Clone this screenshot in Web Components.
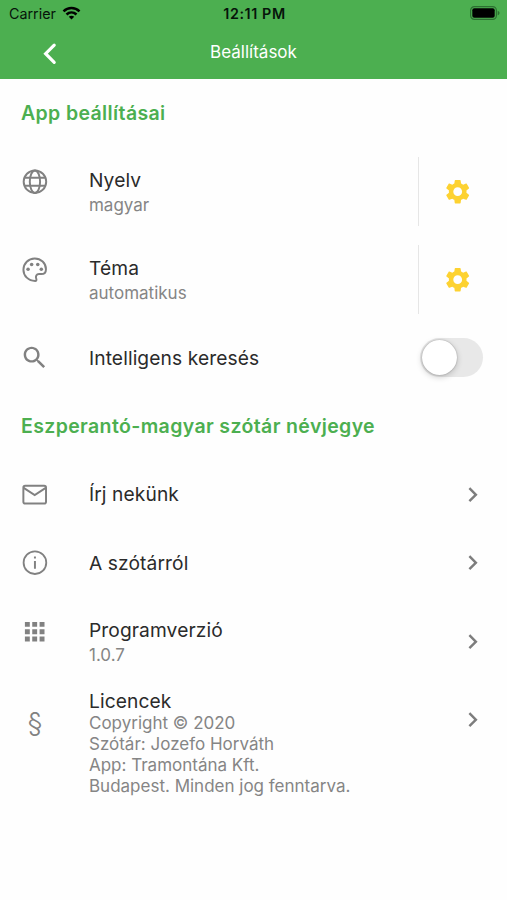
<!DOCTYPE html>
<html lang="hu">
<head>
<meta charset="utf-8">
<title>Beállítások</title>
<style>
html,body{margin:0;background:#fefefe}
body{width:507px;height:900px;overflow:hidden;font-family:Inter,"Liberation Sans",sans-serif;color:#2b2b2b}
</style>
</head>
<body>
<settings-screen></settings-screen>
<script>
const ICONS = {
  globe: '<g fill="none" stroke="currentColor" stroke-width="1.600"><circle cx="12.200" cy="12" r="9.200"/><ellipse cx="12.200" cy="12" rx="4.200" ry="9.200"/><path d="M3.700 8.700h17M3.700 15.300h17"/></g>',
  palette: '<path d="M12 2.800C6.900 2.800 2.800 6.900 2.800 12s4.100 9.200 9.600 9.200c1 0 1.200-.8.900-1.700-.9-2.200.2-3.900 2.200-3.900h1.900c2.200 0 3.800-1.500 3.800-4C21.200 6.700 17.100 2.800 12 2.800z" fill="none" stroke="currentColor" stroke-width="1.600"/><circle cx="6.600" cy="11.600" r="1.450"/><circle cx="9.500" cy="7.700" r="1.450"/><circle cx="14.500" cy="7.700" r="1.450"/><circle cx="17.400" cy="11.600" r="1.450"/>',
  search: '<path d="M15.500 14h-.79l-.28-.27C15.410 12.590 16 11.110 16 9.500 16 5.910 13.090 3 9.500 3S3 5.910 3 9.500 5.910 16 9.500 16c1.610 0 3.090-.59 4.230-1.570l.27.28v.79l5 4.990L20.490 19l-4.990-5zm-6 0C7.010 14 5 11.990 5 9.500S7.010 5 9.500 5 14 7.010 14 9.500 11.990 14 9.500 14z"/>',
  mail: '<rect x="2.750" y="4.750" width="18.500" height="14.500" rx="1.500" fill="none" stroke="currentColor" stroke-width="1.600"/><path d="M3 6.400l9 6 9-6" fill="none" stroke="currentColor" stroke-width="1.600"/>',
  info: '<circle cx="12.200" cy="12" r="9.250" fill="none" stroke="currentColor" stroke-width="1.500"/><path d="M11.400 10.700h1.600v6.200h-1.600zM11.400 7h1.600v1.600h-1.600z"/>',
  apps: '<path d="M4 8h4V4H4v4zm6 12h4v-4h-4v4zm-6 0h4v-4H4v4zm0-6h4v-4H4v4zm6 0h4v-4h-4v4zm6-10v4h4V4h-4zm-6 4h4V4h-4v4zm6 6h4v-4h-4v4zm0 6h4v-4h-4v4z"/>',
  next: '<path d="M10 6L8.590 7.410 13.170 12l-4.580 4.590L10 18l6-6z"/>',
  gear: '<path d="M19.140 12.940c.04-.3.060-.61.060-.94 0-.32-.02-.64-.07-.94l2.030-1.580c.18-.14.23-.41.120-.61l-1.920-3.320c-.12-.22-.37-.29-.59-.22l-2.390.96c-.5-.38-1.030-.7-1.620-.94l-.36-2.540c-.04-.24-.24-.41-.48-.41h-3.840c-.24 0-.43.17-.47.410l-.36 2.540c-.59.240-1.130.570-1.620.940l-2.390-.96c-.22-.08-.47 0-.59.220L2.740 8.870c-.12.210-.08.470.120.610l2.030 1.580c-.05.3-.09.630-.09.940s.02.640.070.940l-2.030 1.580c-.18.140-.23.410-.12.610l1.920 3.320c.12.220.37.290.59.220l2.390-.96c.5.380 1.030.7 1.620.940l.36 2.540c.05.240.24.410.48.410h3.840c.24 0 .44-.17.470-.41l.36-2.540c.59-.24 1.130-.56 1.620-.94l2.390.96c.22.080.47 0 .59-.22l1.920-3.320c.12-.22.070-.47-.12-.61l-2.010-1.580zM12 15.600c-1.980 0-3.600-1.620-3.600-3.600s1.620-3.600 3.600-3.600 3.600 1.620 3.600 3.600-1.620 3.600-3.600 3.600z"/>',
  back: '<path d="M16.500 5L9.500 12l7 7" fill="none" stroke="currentColor" stroke-width="2.600" stroke-linecap="round"/>'
};

function define(name, html) {
  const t = document.createElement('template');
  t.innerHTML = html;
  customElements.define(name, class extends HTMLElement {
    constructor() {
      super();
      this.attachShadow({mode: 'open'}).append(t.content.cloneNode(true));
    }
  });
}

customElements.define('app-icon', class extends HTMLElement {
  constructor() { super(); this.attachShadow({mode: 'open'}); }
  connectedCallback() {
    this.shadowRoot.innerHTML = `<style>:host{display:block;flex:none;width:29.4px;height:29.4px}svg{display:block;width:100%;height:100%}</style><svg viewBox="0 0 24 24" fill="currentColor">${ICONS[this.getAttribute('name')]}</svg>`;
  }
});

define('status-bar', `<style>
:host{display:grid;grid-template-columns:1fr auto 1fr;align-items:center;height:27px;color:#06140a;font-size:14.300px;line-height:27px;box-sizing:border-box;padding:0 7px 0 9px}
.l{display:flex;align-items:center;gap:6px;letter-spacing:0}
.t{font-weight:600;letter-spacing:.6px}
.r{display:flex;justify-content:flex-end}
svg{display:block}
.l svg{margin-top:-2px}
.r svg{margin-top:-1px}
</style>
<div class="l"><span>Carrier</span><svg width="19" height="14" viewBox="0 0 18 14" fill="none" stroke="#000" stroke-width="2.500"><path d="M1 5.300C5.500.8 12.500.8 17 5.300M4 8.500c2.900-2.800 7.100-2.800 10 0"/><path d="M9 13.600l-2.700-2.900c1.500-1.400 3.900-1.400 5.400 0z" fill="#000" stroke="none"/></svg></div>
<span class="t">12:11 PM</span>
<div class="r"><svg width="30" height="14" viewBox="0 0 30 14"><rect x=".6" y=".6" width="25.800" height="12.800" rx="3.800" fill="none" stroke="#2c7031" stroke-width="1.200"/><rect x="2.300" y="2.300" width="22.400" height="9.400" rx="2" fill="#000"/><path d="M27.700 4.700c2.400.9 2.400 3.700 0 4.600z" fill="#2c7031"/></svg></div>`);

define('nav-bar', `<style>
:host{display:grid;grid-template-columns:1fr auto 1fr;align-items:center;height:52px;color:#fff;font-size:17px;box-sizing:border-box;padding:0 34px 2px 34px}
app-icon{margin-top:3px}
</style><app-icon name="back"></app-icon><span><slot></slot></span>`);

define('section-title', `<style>
:host{display:flex;align-items:center;height:68.300px;padding-left:21px;color:#4caf50;font-weight:600;font-size:19.500px;white-space:nowrap;letter-spacing:.37px}
</style><slot></slot>`);

define('toggle-switch', `<style>
:host{display:flex;align-items:center;width:62.500px;height:38.500px;border-radius:20px;background:#e8e8e8;box-sizing:border-box;padding-left:1.500px;margin-right:24.500px}
i{width:35px;height:35px;border-radius:50%;background:#fff;box-shadow:0 2px 6px rgba(0,0,0,.2),0 0 1.500px rgba(0,0,0,.35)}
</style><i></i>`);

define('gear-action', `<style>
:host{display:flex;align-items:center;justify-content:center;height:68.600px;width:79px;border-left:1.500px solid #e6e6e6;margin-right:10px;box-sizing:border-box;color:#fdd231}
</style><app-icon name="gear"></app-icon>`);

define('setting-row', `<style>
:host{display:grid;grid-template-columns:29.400px 1fr auto;column-gap:39.200px;height:88.100px;padding-left:20.400px;box-sizing:border-box;align-items:start}
.lead{color:#818181;padding-top:19.500px}
.text{padding-top:20.300px;white-space:nowrap}
.title{font-size:19.200px;line-height:25px;letter-spacing:.1px}
.sub{font-size:17px;line-height:25px;color:#858585}
.trail{color:#7d7d7d;align-self:center}
::slotted(app-icon[slot=trail]){margin-right:19.500px}
:host([single]){height:68.500px}
:host([single]) .text{padding-top:22.200px}
:host([tall]){height:120px}
:host([tall]) .text{padding-top:4.500px}
:host([tall]) .title{line-height:23.200px}
:host([tall]) .sub{line-height:21px}
:host([tall]) .lead{padding-top:21px;font-size:27.500px;font-weight:300;line-height:32px;text-align:center}
:host([tall]) .trail{align-self:start;padding-top:19.600px}
</style>
<div class="lead"><slot name="lead"></slot></div>
<div class="text"><div class="title"><slot></slot></div><div class="sub"><slot name="sub"></slot></div></div>
<div class="trail"><slot name="trail"></slot></div>`);

define('settings-screen', `<style>
:host{display:block;width:507px;height:900px}
header{background:#4caf50;height:79px}
</style>
<header><status-bar></status-bar><nav-bar>Beállítások</nav-bar></header>
<main>
<section-title>App beállításai</section-title>
<setting-row><app-icon slot="lead" name="globe"></app-icon>Nyelv<span slot="sub">magyar</span><gear-action slot="trail"></gear-action></setting-row>
<setting-row><app-icon slot="lead" name="palette"></app-icon>Téma<span slot="sub">automatikus</span><gear-action slot="trail"></gear-action></setting-row>
<setting-row single><app-icon slot="lead" name="search"></app-icon>Intelligens keresés<toggle-switch slot="trail"></toggle-switch></setting-row>
<section-title>Eszperantó-magyar szótár névjegye</section-title>
<setting-row single><app-icon slot="lead" name="mail"></app-icon>Írj nekünk<app-icon slot="trail" name="next"></app-icon></setting-row>
<setting-row single><app-icon slot="lead" name="info"></app-icon>A szótárról<app-icon slot="trail" name="next"></app-icon></setting-row>
<setting-row><app-icon slot="lead" name="apps"></app-icon>Programverzió<span slot="sub">1.0.7</span><app-icon slot="trail" name="next"></app-icon></setting-row>
<setting-row tall><span slot="lead">§</span>Licencek<span slot="sub">Copyright © 2020<br>Szótár: Jozefo Horváth<br>App: Tramontána Kft.<br>Budapest. Minden jog fenntarva.</span><app-icon slot="trail" name="next"></app-icon></setting-row>
</main>`);
</script>
</body>
</html>
